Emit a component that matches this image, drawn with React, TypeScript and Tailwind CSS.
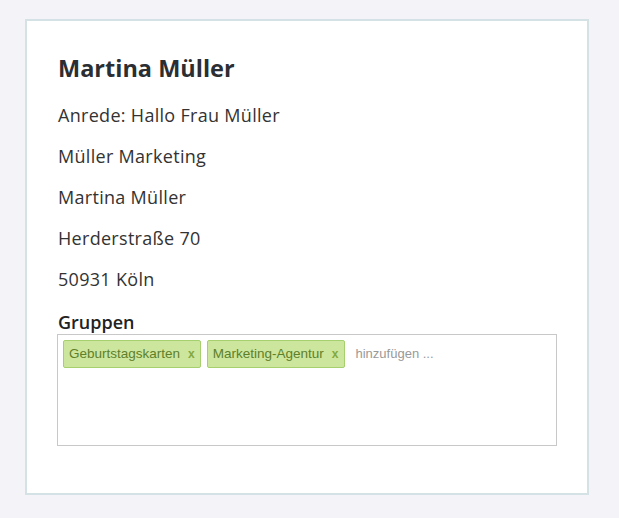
import React from "react";

function Tag({ label }: { label: string }) {
  return (
    <span className="flex h-[28px] items-center gap-[8px] rounded-[2px] border border-[#a6cf6e] bg-[#cde69d] pl-[5px] pr-[5px] text-[13.5px] text-[#5f7f2a] [font-family:'Liberation_Sans',Arial,sans-serif]">
      <span>{label}</span>
      <span className="text-[12px] font-bold text-[#83a93f]">x</span>
    </span>
  );
}

export default function App() {
  const lines = ["Anrede: Hallo Frau Müller", "Müller Marketing", "Martina Müller", "Herderstraße 70", "50931 Köln"];
  return (
    <div className="min-h-[518px] w-full bg-[#f4f4f8] pl-[25px] pt-[19px] [font-family:'Open_Sans',sans-serif]">
      <div className="box-border h-[476px] w-[564px] border-2 border-[#d4e2e6] bg-white px-[30px] pt-[32px]">
        <h1 className="pl-[1px] text-[23.5px] font-bold leading-[30px] text-[#2b2e33]">Martina Müller</h1>
        <div className="mt-[21px] flex flex-col gap-[18px]">
          {lines.map((l) => (
            <p key={l} className="pl-[1px] text-[18px] leading-[23px] tracking-[0.3px] text-[#333333]">
              {l}
            </p>
          ))}
        </div>
        <div className="mt-[20px] pl-[1px] text-[18px] font-semibold leading-[23px] text-[#222222]">Gruppen</div>
        <div className="box-border h-[112px] w-full border border-[#c8c8c8] bg-white">
          <div className="flex items-center gap-[6px] pl-[5px] pt-[5px]">
            <Tag label="Geburtstagskarten" />
            <Tag label="Marketing-Agentur" />
            <span className="ml-[5px] text-[13px] text-[#999999] [font-family:'Liberation_Sans',Arial,sans-serif]">hinzufügen ...</span>
          </div>
        </div>
      </div>
    </div>
  );
}
